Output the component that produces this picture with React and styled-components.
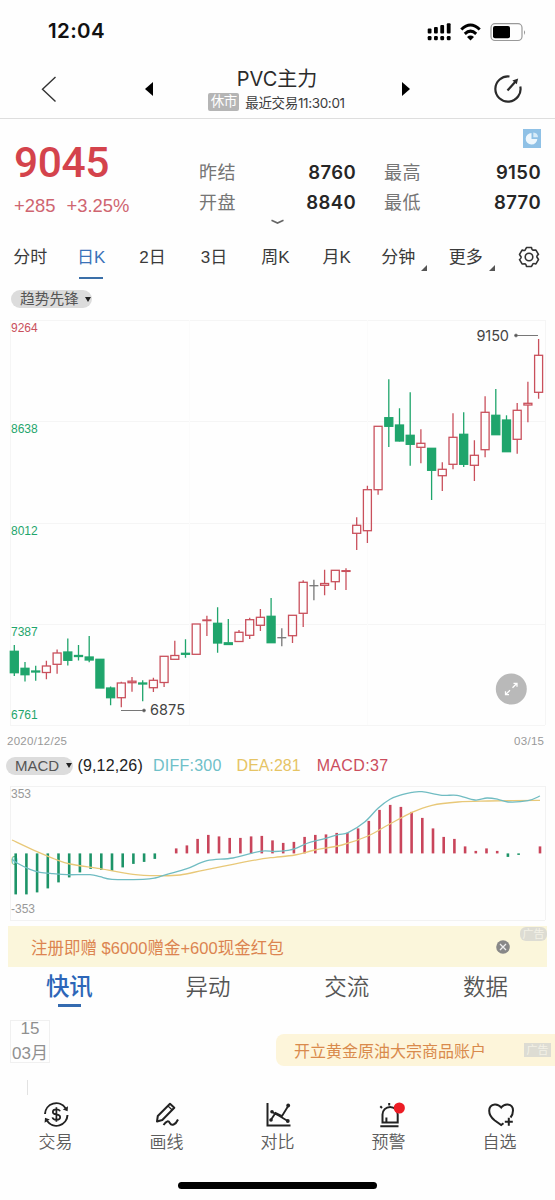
import React from 'react';
import styled, { createGlobalStyle } from 'styled-components';

const red = '#c9505c';
const green = '#1fa56c';
const sans = "Inter, 'Noto Sans CJK SC', sans-serif";
const arial = "'Liberation Sans', 'Noto Sans CJK SC', sans-serif";

const GlobalStyle = createGlobalStyle`
  * { box-sizing: border-box; }
  body { margin: 0; background: #fefefe; }
  svg { display: block; overflow: visible; }
`;

const Screen = styled.div`
  width: 555px;
  height: 1200px;
  display: flex;
  flex-direction: column;
  overflow: hidden;
  background: #fefefe;
  color: #333;
  font-family: ${sans};
  white-space: nowrap;
`;

const StatusBar = styled.div`
  height: 61px;
  flex: none;
  display: flex;
  justify-content: space-between;
  padding: 0 29px 0 48px;
`;

const Clock = styled.div`
  font-size: 20.5px;
  font-weight: 600;
  line-height: 62px;
  color: #111;
  letter-spacing: 0.35px;
`;

const Header = styled.header`
  height: 58px;
  flex: none;
  display: grid;
  grid-template-columns: 98px 102px 154px 103px 98px;
  align-items: center;
  justify-items: center;
  border-bottom: 1px solid #dedede;
  padding-bottom: 2px;
`;

const TitleBox = styled.div`
  display: flex;
  flex-direction: column;
  align-items: center;
`;

const Title = styled.div`
  padding-top: 1px;
  font-size: 20px;
  line-height: 26px;
  color: #2b2b2b;
`;

const SubTitle = styled.div`
  display: flex;
  align-items: center;
  gap: 6px;
  height: 20px;
  margin-left: -1px;
  font-size: 13.5px;
  letter-spacing: -0.35px;
  color: #3c3c3c;
`;

const Closed = styled.span`
  width: 31px;
  height: 18px;
  border-radius: 2px;
  background: #b5b5b5;
  color: #fff;
  font-size: 13.5px;
  line-height: 17px;
  text-align: center;
`;

const Quote = styled.section`
  height: 118px;
  flex: none;
  display: grid;
  grid-template-columns: 185px 157px 157px;
  padding-left: 14px;
  position: relative;
`;

const PriceBox = styled.div`
  padding-top: 19px;
`;

const Price = styled.div`
  font-family: Roboto, sans-serif;
  font-size: 42.5px;
  font-weight: 500;
  line-height: 50px;
  letter-spacing: -0.4px;
  color: #d4434c;
`;

const Change = styled.div`
  display: flex;
  gap: 11px;
  margin-top: 7px;
  font-family: ${arial};
  font-size: 18.4px;
  line-height: 22px;
  color: #cf6570;
`;

const Stats = styled.div`
  padding-top: 39px;
  margin-left: ${p => p.$shift || 0}px;
  width: 157px;
`;

const Stat = styled.div`
  display: flex;
  justify-content: space-between;
  height: 29.5px;
  font-size: 18.5px;
  font-weight: 600;
  line-height: 29.5px;
  letter-spacing: 0.4px;
  color: #262626;

  span {
    font-size: 18px;
    font-weight: 400;
    color: #757575;
  }
`;

const Share = styled.div`
  position: absolute;
  left: 523px;
  top: 10px;
`;

const Expand = styled.div`
  position: absolute;
  left: 271px;
  top: 99.5px;
`;

const Periods = styled.nav`
  height: 46px;
  flex: none;
  display: grid;
  grid-template-columns: 60.5px repeat(6, 61.4px) 74px 1fr;
  justify-items: center;
`;

const Period = styled.div`
  position: relative;
  height: 42px;
  font-family: ${arial};
  font-size: 17px;
  line-height: 41px;
  color: ${p => (p.$active ? '#3a72b8' : '#3a3a3a')};

  &::after {
    content: '';
    position: absolute;
    ${p => p.$active && 'left: 2px; right: 2px; bottom: 0; height: 2px; background: #3a6fa8;'}
    ${p => p.$more && 'right: -12px; bottom: 8px; border: 3px solid; border-color: transparent #555 #555 transparent;'}
  }
`;

const Gear = styled.div`
  padding-top: 9px;
`;

const ChipRow = styled.div`
  height: 32px;
  flex: none;
  padding: 7px 0 0 11px;
`;

const Chip = styled.div`
  width: ${p => p.$w}px;
  height: 18px;
  display: flex;
  align-items: center;
  justify-content: space-between;
  padding: 0 1px 0 9px;
  border-radius: 9px;
  background: #dcdcdc;
  font-family: ${arial};
  font-size: ${p => p.$size}px;
  line-height: 18px;
  color: #555;

  &::after {
    content: '';
    border: 3.5px solid transparent;
    border-top: 5px solid #222;
    border-bottom: 0;
  }
`;

const MacdRow = styled.div`
  height: 27px;
  flex: none;
  display: flex;
  align-items: center;
  padding: 0 0 2px 6px;
  font-family: ${arial};
  font-size: 16px;
`;

const Reading = styled.span`
  margin-left: ${p => p.$gap}px;
  color: ${p => p.$color};
  letter-spacing: ${p => p.$ls || 0}px;
`;

const Banner = styled.div`
  height: 41px;
  flex: none;
  margin: 7px 8px 0;
  display: flex;
  align-items: center;
  justify-content: space-between;
  padding: 0 37px 0 23px;
  background: #fbf6db;
  position: relative;
  font-family: ${arial};
  font-size: 16.5px;
  color: #dc8450;
`;

const AdTag = styled.span`
  width: 27px;
  height: 14px;
  border-radius: ${p => p.$r}px;
  background: #dddcd3;
  color: #f3f1e6;
  font-size: 11px;
  line-height: 14px;
  text-align: center;
`;

const CornerTag = styled(AdTag)`
  position: absolute;
  right: 0;
  top: 1px;
`;

const Tabs = styled.nav`
  height: 43px;
  flex: none;
  display: grid;
  grid-template-columns: repeat(4, 1fr);
  justify-items: center;
`;

const Tab = styled.div`
  position: relative;
  height: 41px;
  font-size: ${p => (p.$active ? 23.5 : 22.5)}px;
  font-weight: ${p => (p.$active ? 500 : 350)};
  line-height: 39px;
  color: ${p => (p.$active ? '#2d66b8' : '#555')};

  &::after {
    content: '';
    position: absolute;
    left: 12px;
    right: 12px;
    bottom: 1px;
    height: 3px;
    background: ${p => (p.$active ? '#356bb0' : 'none')};
  }
`;

const Feed = styled.section`
  height: 87px;
  flex: none;
  display: flex;
  justify-content: space-between;
`;

const Timeline = styled.div`
  padding: 10px 0 0 10px;

  &::after {
    content: '';
    display: block;
    width: 1px;
    height: 15px;
    margin: 17px 0 0 17px;
    background: #e2e2e2;
  }
`;

const DateBox = styled.div`
  width: 40px;
  height: 43px;
  border: 1px solid #f0f0f0;
  font-family: ${arial};
  font-size: 17px;
  line-height: 25px;
  text-align: center;
  color: #909090;

  div {
    margin: -5px -4px 5px;
  }
`;

const Pill = styled.div`
  width: 279px;
  height: 32px;
  margin-top: 24px;
  display: flex;
  align-items: center;
  justify-content: space-between;
  padding: 0 4px 0 18px;
  border-radius: 8px 0 0 8px;
  background: #fdf5da;
  font-size: 16px;
  color: #d98a4c;
`;

const BottomNav = styled.nav`
  height: 85px;
  flex: none;
  display: grid;
  grid-template-columns: repeat(5, 1fr);
`;

const NavItem = styled.div`
  display: flex;
  flex-direction: column;
  align-items: center;
  padding-top: 3px;
  font-size: 17px;
  font-weight: 350;
  line-height: 24px;
  color: #5c5c5c;
`;

const HomeBar = styled.div`
  width: 199px;
  height: 7px;
  flex: none;
  margin-left: 178px;
  border-radius: 4px;
  background: #000;
`;

// [kind, open/close top, open/close bottom, high, low]
const candles = [
  ['g', 651.3, 672.7, 645, 676], ['g', 668.3, 674.7, 662, 681.5], ['g', 671, 672, 665.7, 680.7],
  ['r', 666, 672.5, 660.7, 679.3], ['r', 653, 664.3, 649.5, 673.7], ['g', 652, 660.3, 638.5, 665.5],
  ['g', 655.5, 656.5, 645, 660.5], ['g', 657, 660, 636, 662.3], ['g', 659.3, 688, 659.3, 688],
  ['g', 688, 697.7, 686.5, 705.3], ['r', 683, 697.7, 681.7, 707.3], ['r', 681.2, 682.7, 677, 691.7],
  ['g', 683, 684, 680.3, 701.3], ['r', 680.3, 687.7, 677.7, 692], ['r', 656.3, 682.5, 656.3, 687],
  ['r', 655.5, 659.3, 640.7, 659.3], ['g', 653.3, 654.3, 639.3, 657.7], ['r', 624, 654.3, 624, 654.3],
  ['r', 620, 620.6, 615.7, 636], ['g', 623.3, 643, 607.3, 652.7], ['g', 642.8, 644.5, 619, 644],
  ['r', 632.3, 641.5, 630, 641.5], ['r', 619.7, 635.3, 617.7, 639], ['r', 617.3, 625.3, 609, 631],
  ['g', 616.3, 642.7, 598, 642.7], ['n', 637.7, 637.7, 628.3, 646.3], ['r', 615.3, 635.7, 615.3, 643],
  ['r', 582.3, 613.3, 580.3, 627], ['n', 585.7, 585.7, 579.7, 600.3], ['r', 583.5, 585.3, 569.7, 595.3],
  ['r', 570.3, 581.7, 570.3, 590], ['r', 570.7, 571.4, 568.3, 590], ['r', 525.3, 533.3, 517.3, 550],
  ['r', 489.7, 530.7, 485.7, 543], ['r', 426.3, 489.7, 426.3, 494.7], ['g', 417.7, 426.3, 379.3, 447],
  ['g', 425, 441, 408.3, 441.5], ['g', 435.3, 444.3, 392.3, 465.7], ['r', 443.3, 447.3, 429.3, 463.3],
  ['g', 448.3, 470.3, 448.3, 500], ['r', 469.3, 475.7, 462.3, 491], ['r', 437.3, 464.3, 413.3, 469.3],
  ['g', 434.3, 464.3, 412.3, 467], ['r', 455.3, 465.3, 440.3, 481], ['r', 412.3, 449.7, 396.3, 457.3],
  ['g', 415.3, 434.7, 389, 434.7], ['g', 420, 451.7, 415.3, 451.7], ['r', 410.3, 439.3, 403, 453.7],
  ['r', 403.3, 405, 381.7, 422.3], ['r', 355.3, 392.3, 339, 398.7],
];

const bars = [
  -41, -41, -39, -35, -29, -24, -19, -15.5, -16.5, -17.5, -14, -10.5, -8.5, -5.5, 0,
  5, 8, 14.5, 18.5, 17, 15.5, 15.5, 17, 17.5, 13, 10.5, 11.5, 16.5, 18.5, 19, 20.5, 20.5,
  25, 32.5, 43.5, 48.5, 46.5, 41.5, 35.5, 25, 16.5, 14.5, 7, 2.5, 5, 2.5, -3.5, -1.5, 0, 7,
];

const diff = [
  [12, 859], [17, 863], [30, 869.3], [40, 872.3], [53, 873.7], [67, 874.7], [90, 874.7], [100, 876.7],
  [112, 879.3], [143, 879.3], [155, 878], [167, 874.3], [187, 868.7], [207, 860.7], [233, 858], [260, 851.3],
  [275, 851.5], [288, 850.3], [295, 848.7], [308, 843], [322, 839.3], [338, 834.7], [348, 832.7], [365, 821.7],
  [378, 808.3], [390, 799.3], [402, 794.7], [412, 792.3], [422, 791.7], [442, 795.3], [457, 795.3], [475, 800],
  [487, 798], [498, 799.3], [508, 802], [528, 800.7], [540, 796],
];

const dea = [
  [12, 840], [37, 851.7], [53, 858.3], [70, 864], [100, 868.7], [133, 874.3], [157, 875.7], [180, 875],
  [203, 870.3], [233, 864.3], [263, 858.7], [275, 857.3], [295, 855], [315, 850], [342, 845], [368, 836],
  [388, 825], [412, 812.3], [432, 805.3], [458, 802], [488, 801], [540, 800.3],
];

const colors = { r: red, g: green, n: '#777' };

// catmull-rom through the points, written as cubic beziers
const smooth = pts => pts.slice(1).reduce((d, p, i) => {
  const a = pts[i - 1] || pts[i];
  const b = pts[i];
  const c = pts[i + 2] || p;
  return `${d} C${b[0] + (p[0] - a[0]) / 6},${b[1] + (p[1] - a[1]) / 6} ${p[0] - (c[0] - b[0]) / 6},${p[1] - (c[1] - b[1]) / 6} ${p[0]},${p[1]}`;
}, `M${pts[0][0]},${pts[0][1]}`);

const Candle = ({ data, index }) => {
  const [kind, top, bottom, high, low] = data;
  const x = 14.3 + index * 10.7;
  const color = colors[kind];
  return (
    <g stroke={color} strokeWidth="1.3" fill={kind === 'g' ? color : 'none'}>
      <path d={`M${x},${high}V${top}M${x},${bottom}V${low}`} />
      {kind === 'n'
        ? <path d={`M${x - 4.5},${top}h9`} />
        : <rect x={x - 4} y={top} width="8" height={Math.max(bottom - top, 0.4)} />}
    </g>
  );
};

const ChartSvg = styled.svg`
  flex: none;
  font-family: ${arial};
`;

const KLine = () => (
  <ChartSvg width="555" height="438" viewBox="0 315 555 438">
    <path d="M10,320.5H545M10,421.5H545M10,523.5H545M10,624.5H545M10,725.5H545M10.5,320V725M545.5,320V725" stroke="#f5f5f5" fill="none" />
    <path d="M189.5,320V725M367.5,320V725" stroke="#fbfbfb" fill="none" />
    <g fontSize="12">
      <text x="11" y="332" fill={red}>9264</text>
      <text x="11" y="433" fill={green}>8638</text>
      <text x="11" y="535" fill={green}>8012</text>
      <text x="11" y="636" fill={green}>7387</text>
      <text x="11" y="719" fill={green}>6761</text>
    </g>
    {candles.map((c, i) => <Candle key={i} data={c} index={i} />)}
    <g stroke="#777" fill="#555">
      <path d="M516,335.5H538M121,710.5H144" />
      <circle cx="516" cy="335.5" r="1.4" />
      <circle cx="144" cy="710.5" r="1.4" />
    </g>
    <g fontSize="14.5" fill="#444" fontFamily="Inter">
      <text x="476.5" y="340.5" textLength="32.5">9150</text>
      <text x="150" y="715.3" textLength="35">6875</text>
    </g>
    <g fontSize="11.5" fill="#999">
      <text x="7" y="745" textLength="60">2020/12/25</text>
      <text x="514" y="745" textLength="30">03/15</text>
    </g>
    <circle cx="511.3" cy="689" r="15.5" fill="#b9b9b9" />
    <g stroke="#fff" strokeWidth="1.3" fill="none">
      <path d="M512.5,687.8L517,683.3M513.5,683.3H517V686.8M510,690.2L505.5,694.7M505.5,691.2V694.7H509" />
    </g>
  </ChartSvg>
);

const Macd = () => (
  <ChartSvg width="555" height="139" viewBox="0 780 555 139">
    <path d="M10,786.5H545M10,920.5H545M10.5,786V920M545.5,786V920" stroke="#f2f2f2" fill="none" />
    <g fontSize="12" fill="#999">
      <text x="11" y="798">353</text>
      <text x="11" y="865" fill={green} opacity="0.7">0</text>
      <text x="11" y="913">-353</text>
    </g>
    {bars.map((v, i) => v !== 0 && (
      <rect
        key={i}
        x={14.4 + i * 10.7}
        y={v > 0 ? 853.4 - v : 853.4}
        width="2.6"
        height={Math.abs(v)}
        fill={v > 0 ? '#c9455b' : '#1d9468'}
      />
    ))}
    <path d={smooth(dea)} fill="none" stroke="#e8c878" strokeWidth="1.3" />
    <path d={smooth(diff)} fill="none" stroke="#70bcc2" strokeWidth="1.3" />
  </ChartSvg>
);

const StatusIcons = () => (
  <svg width="100" height="61" viewBox="426 0 100 61">
    <g fill="#000">
      <rect x="427.7" y="28.5" width="3.8" height="5" rx="1" />
      <rect x="434" y="27" width="3.8" height="6.5" rx="1" />
      <rect x="440.3" y="25" width="3.8" height="8.5" rx="1" />
      <rect x="446.8" y="23.3" width="3.8" height="10.2" rx="1" />
      {[427.7, 434, 440.3, 446.8].map(x => <rect key={x} x={x} y="36" width="3.8" height="4.2" rx="1.2" />)}
      <path d="M470.5,40.5L467,37Q470.5,34.2 474,37Z" />
      <rect x="493" y="26" width="17" height="12.2" rx="2" />
      <path d="M524,30.3q2.2,2 0,4.6z" fill="#999" />
    </g>
    <g fill="none" stroke="#000" strokeWidth="3">
      <path d="M461.3,29.5Q470.5,20.5 479.7,29.5" />
      <path d="M464.8,33.8Q470.5,28.5 476.2,33.8" />
    </g>
    <rect x="491" y="23.7" width="31" height="16.8" rx="4" fill="none" stroke="#999" strokeWidth="1.2" />
  </svg>
);

const navIcon = { width: 30, height: 30, viewBox: '0 0 30 30', fill: 'none', stroke: '#222', strokeWidth: 2 };

const TradeIcon = () => (
  <svg {...navIcon}>
    <path d="M4,14A11.2,11.2 0 0 1 24.5,8.2M26.5,15A11.2,11.2 0 0 1 6,20.8" />
    <path d="M27,6.2L26.6,11.3L21.8,9.5ZM3.6,22.8L4,17.7L8.8,19.5Z" fill="#222" stroke="none" />
    <path d="M19,11.3Q18.4,9.3 15.4,9.3Q11.8,9.3 11.8,11.9Q11.8,14 15.4,14.4Q19.2,14.8 19.2,17.2Q19.2,19.8 15.5,19.8Q11.9,19.8 11.4,17.4M15.4,7.2V21.8" strokeWidth="1.7" />
  </svg>
);

const DrawIcon = () => (
  <svg {...navIcon}>
    <path d="M5,21.5L5.8,16L18,3.8L22.3,7.8L10.3,20L5,21.5Z" strokeLinejoin="round" />
    <path d="M16,6L20.2,10" strokeWidth="1.2" />
    <path d="M11.5,25C14.5,20.5 16.5,20.5 18,23.2C19.5,26 23.5,25 26,19.5" />
  </svg>
);

const CompareIcon = () => (
  <svg {...navIcon}>
    <path d="M4.5,3V25.5H27.5" />
    <path d="M7.5,20.5L12.5,13L19,16L25.5,5.5M9,12L16.5,16L25.5,21.5" strokeWidth="1.8" />
    <g fill="#222" stroke="none">
      <circle cx="8" cy="20" r="1.8" />
      <circle cx="9" cy="11.7" r="1.8" />
      <circle cx="25.2" cy="5.5" r="1.9" />
      <circle cx="24.8" cy="21" r="1.9" />
    </g>
  </svg>
);

const AlertIcon = () => (
  <svg {...navIcon}>
    <path d="M8.5,22.5V14.5A7.6,7.6 0 0 1 23.7,14.5V22.5ZM12.4,22V17.5" />
    <path d="M6.3,26.2H24.5M15.2,3V5.6M6.3,6.3L8,8" />
    <circle cx="25.3" cy="8" r="5.6" fill="#ec1c24" stroke="none" />
  </svg>
);

const FavIcon = () => (
  <svg {...navIcon}>
    <path d="M25.5,17.5Q28,14.5 28,10.5Q28,5 22.5,4.4Q18.5,4.2 16.2,7.5Q13.7,4.2 9.8,4.4Q4.2,5 4.2,10.8Q4.2,16 9.5,20.3L16.2,25L18.5,23.3" />
    <path d="M23.8,17.8V25.8M19.8,21.8H27.8" />
  </svg>
);

const navItems = [
  ['交易', TradeIcon],
  ['画线', DrawIcon],
  ['对比', CompareIcon],
  ['预警', AlertIcon],
  ['自选', FavIcon],
];

const periods = ['分时', '日K', '2日', '3日', '周K', '月K', '分钟', '更多'];

// hexagonal cog outline around (11, 11)
const cog = Array.from({ length: 6 }, (_, i) => {
  const at = (deg, r) => {
    const a = ((i * 60 + deg) * Math.PI) / 180;
    return `${11 + Math.sin(a) * r},${11 - Math.cos(a) * r}`;
  };
  return `${i ? 'L' : 'M'}${at(-15, 9.8)}L${at(15, 9.8)}Q${at(22, 7.6)} ${at(30, 7.9)}`;
}).join('') + 'Z';

const App = () => (
  <>
    <GlobalStyle />
    <Screen>
      <StatusBar>
        <Clock>12:04</Clock>
        <StatusIcons />
      </StatusBar>
      <Header>
        <svg width="16" height="26" viewBox="0 0 16 26" fill="none" stroke="#333" strokeWidth="1.4">
          <path d="M14.5,1L1.5,13.3L14.5,25.5" />
        </svg>
        <svg width="8" height="14" viewBox="0 0 8 14"><path d="M8,0V14L0,7Z" /></svg>
        <TitleBox>
          <Title>PVC主力</Title>
          <SubTitle>
            <Closed>休市</Closed>
            最近交易11:30:01
          </SubTitle>
        </TitleBox>
        <svg width="8" height="14" viewBox="0 0 8 14"><path d="M0,0V14L8,7Z" /></svg>
        <svg width="28" height="30" viewBox="-2 0 28 30" fill="none" stroke="#2b2b2b" strokeWidth="2.2">
          <path d="M15.5,2.5A12.6,12.6 0 1 0 26.3,12.5" />
          <path d="M13.5,16.5L22,7" />
          <path d="M24.2,4.5L22.8,10.3L18.4,6.4Z" fill="#2b2b2b" stroke="none" />
        </svg>
      </Header>
      <Quote>
        <PriceBox>
          <Price>9045</Price>
          <Change><span>+285</span><span>+3.25%</span></Change>
        </PriceBox>
        <Stats>
          <Stat><span>昨结</span>8760</Stat>
          <Stat><span>开盘</span>8840</Stat>
        </Stats>
        <Stats $shift={28}>
          <Stat><span>最高</span>9150</Stat>
          <Stat><span>最低</span>8770</Stat>
        </Stats>
        <Share>
          <svg width="18" height="19" viewBox="0 0 18 19">
            <rect width="18" height="19" fill="#8fc1e6" />
            <path d="M8.5,4A5.8,5.8 0 1 0 14.3,10H8.5Z" fill="#eef7fd" />
            <path d="M10.3,3.5V8.2H15A5,5 0 0 0 10.3,3.5Z" fill="#d7ebf8" />
          </svg>
        </Share>
        <Expand>
          <svg width="13" height="6" viewBox="0 0 13 6" fill="none" stroke="#666" strokeWidth="1.6">
            <path d="M0.5,1.2L6.5,4L12.5,1.2" />
          </svg>
        </Expand>
      </Quote>
      <Periods>
        {periods.map((name, i) => (
          <Period key={name} $active={i === 1} $more={i > 5}>{name}</Period>
        ))}
        <Gear>
          <svg width="22" height="22" viewBox="0 0 22 22" fill="none" stroke="#333" strokeWidth="1.6">
            <path d={cog} strokeLinejoin="round" />
            <circle cx="11" cy="11" r="3.8" />
          </svg>
        </Gear>
      </Periods>
      <ChipRow>
        <Chip $w={81} $size={14.7}>趋势先锋</Chip>
      </ChipRow>
      <KLine />
      <MacdRow>
        <Chip $w={67} $size={15}>MACD</Chip>
        <Reading $gap={4.5} $color="#222" $ls={0.15}>(9,12,26)</Reading>
        <Reading $gap={10} $color="#6fc0c8" $ls={0.25}>DIFF:300</Reading>
        <Reading $gap={15} $color="#e6c465">DEA:281</Reading>
        <Reading $gap={16} $color="#cb4d5d" $ls={0.35}>MACD:37</Reading>
      </MacdRow>
      <Macd />
      <Banner>
        注册即赠 $6000赠金+600现金红包
        <svg width="14" height="14" viewBox="0 0 14 14">
          <circle cx="7" cy="7" r="6.8" fill="#888" />
          <path d="M4,4L10,10M10,4L4,10" stroke="#eee" strokeWidth="1.3" />
        </svg>
        <CornerTag $r={6}>广告</CornerTag>
      </Banner>
      <Tabs>
        <Tab $active>快讯</Tab>
        <Tab>异动</Tab>
        <Tab>交流</Tab>
        <Tab>数据</Tab>
      </Tabs>
      <Feed>
        <Timeline>
          <DateBox><div>15</div><div>03月</div></DateBox>
        </Timeline>
        <Pill>
          开立黄金原油大宗商品账户
          <AdTag $r={0}>广告</AdTag>
        </Pill>
      </Feed>
      <BottomNav>
        {navItems.map(([label, Icon]) => (
          <NavItem key={label}>
            <Icon />
            {label}
          </NavItem>
        ))}
      </BottomNav>
      <HomeBar />
    </Screen>
  </>
);

export default App;
